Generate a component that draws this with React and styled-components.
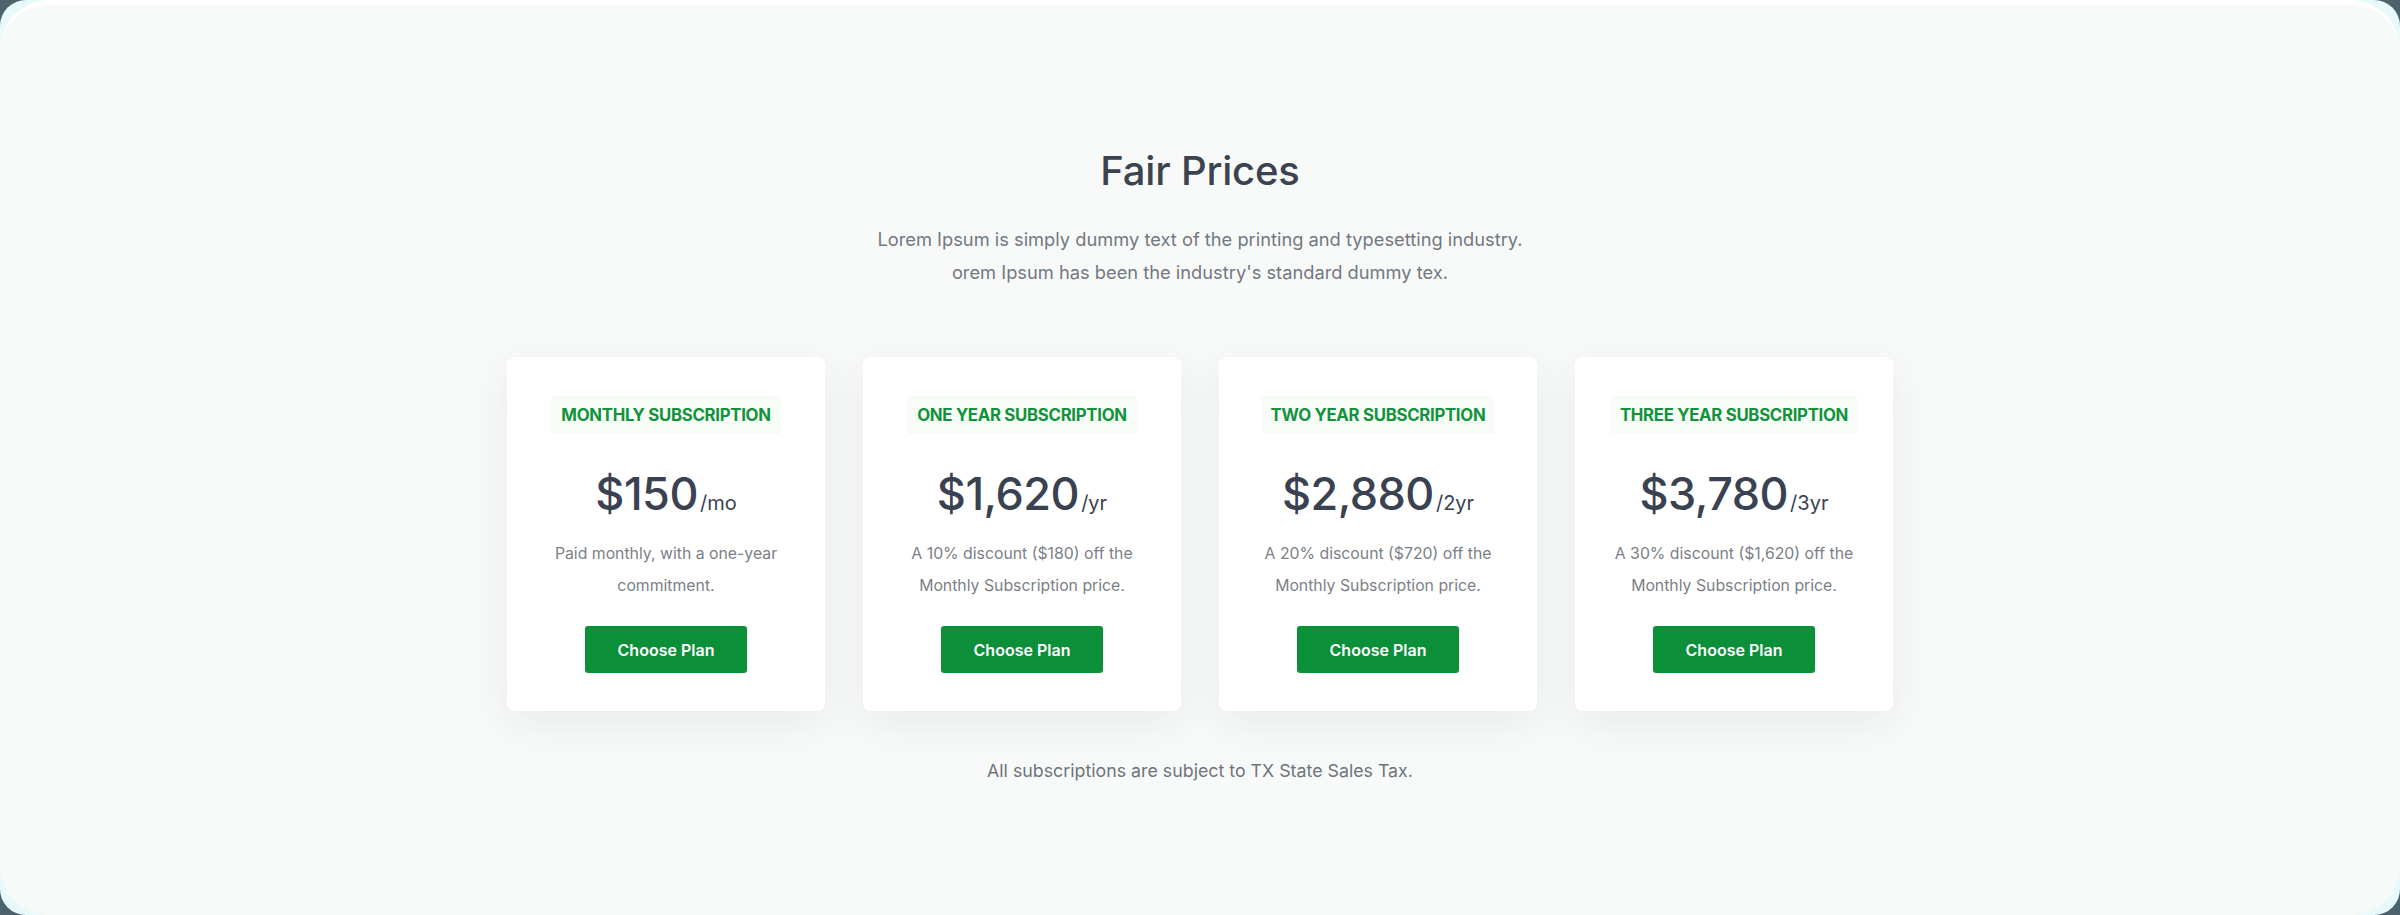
import React from "react";
import styled, { createGlobalStyle } from "styled-components";

const GlobalStyle = createGlobalStyle`
  html, body {
    margin: 0;
    padding: 0;
    background: #4c636d;
  }
  body {
    font-family: "Inter", "Noto Sans", sans-serif;
    -webkit-font-smoothing: antialiased;
  }
`;

const plans = [
  {
    id: "monthly",
    title: "Monthly Subscription",
    price: "$150",
    period: "/mo",
    lines: ["Paid monthly, with a one-year", "commitment."],
  },
  {
    id: "one",
    title: "One Year Subscription",
    price: "$1,620",
    period: "/yr",
    lines: ["A 10% discount ($180) off the", "Monthly Subscription price."],
  },
  {
    id: "two",
    title: "Two Year Subscription",
    price: "$2,880",
    period: "/2yr",
    lines: ["A 20% discount ($720) off the", "Monthly Subscription price."],
  },
  {
    id: "three",
    title: "Three Year Subscription",
    price: "$3,780",
    period: "/3yr",
    lines: ["A 30% discount ($1,620) off the", "Monthly Subscription price."],
  },
];

const PlanCard = ({ title, price, period, lines }) => (
  <Card>
    <Label>{title}</Label>
    <Price>
      {price}
      <Period>{period}</Period>
    </Price>
    <Description>
      {lines.map((line) => (
        <Line key={line}>{line}</Line>
      ))}
    </Description>
    <ChooseButton type="button">Choose Plan</ChooseButton>
  </Card>
);

const App = () => {
  return (
    <>
      <GlobalStyle />
      <Frame>
        <Panel>
          <Title>Fair Prices</Title>
          <Subtitle>
            <Line>
              Lorem Ipsum is simply dummy text of the printing and typesetting
              industry.
            </Line>
            <Line>orem Ipsum has been the industry's standard dummy tex.</Line>
          </Subtitle>
          <CardRow>
            {plans.map((plan) => (
              <PlanCard key={plan.id} {...plan} />
            ))}
          </CardRow>
          <Footnote>All subscriptions are subject to TX State Sales Tax.</Footnote>
        </Panel>
      </Frame>
    </>
  );
};

export default App;

const Frame = styled.div`
  width: 2400px;
  height: 915px;
  background: #e8f9fc;
  border-radius: 26px;
  overflow: hidden;
`;

const Panel = styled.main`
  box-sizing: border-box;
  height: 915px;
  background: #f8faf9;
  border-top: 5px solid #ffffff;
  border-radius: 50px;
  padding-top: 142px;
  display: flex;
  flex-direction: column;
  align-items: center;
`;

const Title = styled.h1`
  margin: 0;
  font-size: 40px;
  line-height: 48px;
  font-weight: 500;
  color: #3b4250;
  letter-spacing: -0.2px;
`;

const Subtitle = styled.p`
  margin: 28px 0 0;
  font-size: 18.3px;
  line-height: 33px;
  color: #737881;
  text-align: center;
`;

const Line = styled.span`
  display: block;
  white-space: nowrap;
`;

const CardRow = styled.section`
  margin-top: 68px;
  display: grid;
  grid-template-columns: repeat(4, 318px);
  gap: 38px;
`;

const Card = styled.article`
  box-sizing: border-box;
  height: 354px;
  background: #ffffff;
  border-radius: 8px;
  box-shadow: 0 12px 40px rgba(40, 60, 50, 0.08);
  padding: 39px 16px 38px;
  display: flex;
  flex-direction: column;
  align-items: center;
`;

const Label = styled.div`
  height: 38px;
  line-height: 38px;
  padding: 0 10px;
  background: #f7fcf6;
  border-radius: 4px;
  color: #13923e;
  font-size: 16.8px;
  font-weight: 700;
  text-transform: uppercase;
  letter-spacing: -0.3px;
  white-space: nowrap;
`;

const Price = styled.div`
  margin-top: 33px;
  font-size: 45px;
  line-height: 53px;
  font-weight: 500;
  color: #3a4252;
  letter-spacing: -0.5px;
  white-space: nowrap;
`;

const Period = styled.span`
  font-size: 20px;
  font-weight: 400;
  letter-spacing: 0;
  margin-left: 2px;
`;

const Description = styled.p`
  margin: 8px 0 0;
  font-size: 15.8px;
  line-height: 32px;
  color: #7b7f87;
  text-align: center;
`;

const ChooseButton = styled.button`
  margin-top: auto;
  width: 162px;
  height: 47px;
  border: none;
  border-radius: 3px;
  background: #0b8f38;
  color: #ffffff;
  font-family: inherit;
  font-size: 16px;
  font-weight: 600;
  cursor: pointer;
`;

const Footnote = styled.p`
  margin: 48px 0 0;
  font-size: 17.8px;
  line-height: 24px;
  color: #6f747c;
`;
